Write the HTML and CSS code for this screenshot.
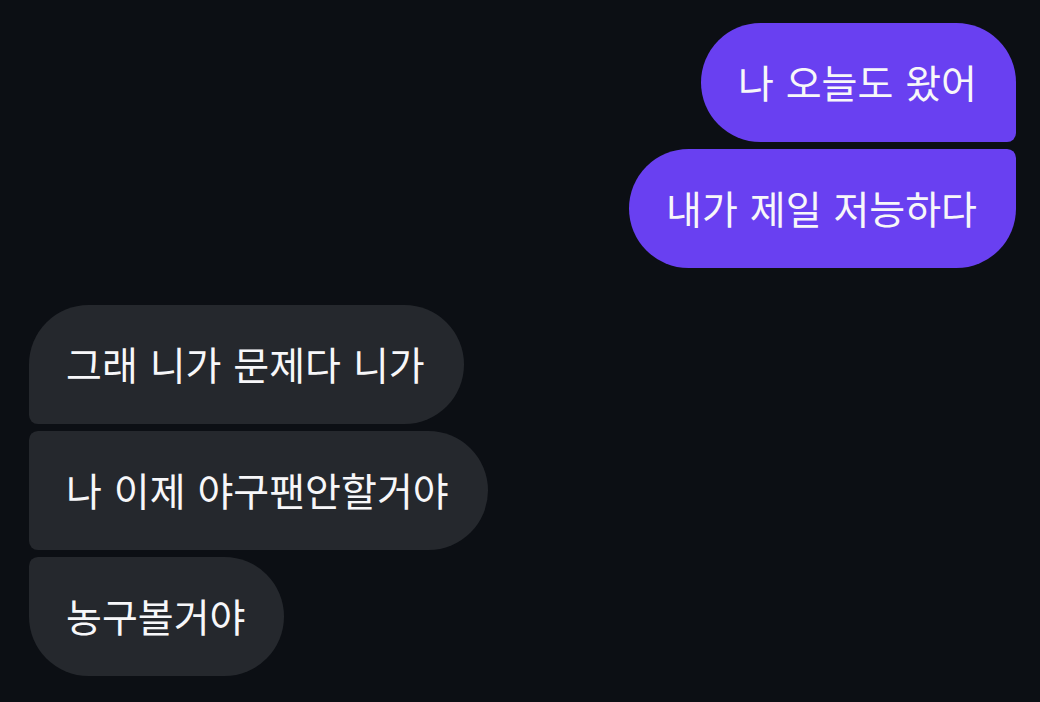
FILE: index.html
```html
<!DOCTYPE html>
<html lang="ko">
<head>
  <meta charset="UTF-8" />
  <meta name="viewport" content="width=device-width, initial-scale=1.0"/>
  <title>Chat</title>
  <link rel="stylesheet" href="styles.css">
</head>
<body>
  <div class="chat">
    <div class="group out">
      <div class="bubble first">나 오늘도 왔어</div>
      <div class="bubble last">내가 제일 저능하다</div>
    </div>
    <div class="group in">
      <div class="bubble first">그래 니가 문제다 니가</div>
      <div class="bubble middle">나 이제 야구팬안할거야</div>
      <div class="bubble last">농구볼거야</div>
    </div>
  </div>
</body>
</html>
```

FILE: styles.css
```css
body {
  margin: 0;
  background-color: #0c0f14;
  font-family: 'Noto Sans CJK KR', 'Noto Sans', sans-serif;
  color: #f7f7f9;
}

.chat {
  display: flex;
  flex-direction: column;
  gap: 37px;
  padding: 23px 24px 0 29px;
}

.group {
  display: flex;
  flex-direction: column;
  gap: 7px;
}

.group.out {
  align-items: flex-end;
}

.group.in {
  align-items: flex-start;
}

.bubble {
  display: flex;
  align-items: center;
  height: 119px;
  box-sizing: border-box;
  padding: 0 39px 4px 37px;
  font-size: 39px;
  word-spacing: 1px;
  border-radius: 60px;
  white-space: nowrap;
}

.out .bubble {
  background-color: #6940f1;
}

.in .bubble {
  background-color: #25282d;
}

.out .first {
  border-bottom-right-radius: 9px;
}

.out .last {
  border-top-right-radius: 9px;
}

.in .first {
  border-bottom-left-radius: 9px;
}

.in .middle {
  border-top-left-radius: 9px;
  border-bottom-left-radius: 9px;
}

.in .last {
  border-top-left-radius: 9px;
}
```
